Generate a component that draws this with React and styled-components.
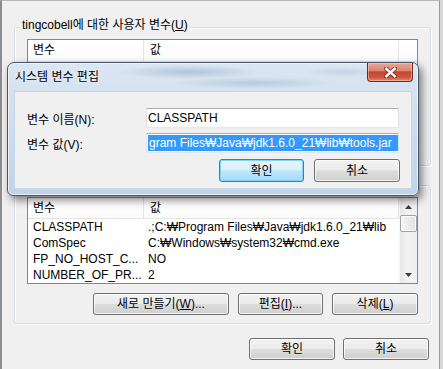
import React from "react";
import styled, { createGlobalStyle } from "styled-components";

const Global = createGlobalStyle`
  html, body { margin: 0; padding: 0; background: #d8d8d8; }
  body {
    font-family: "Liberation Sans", "DejaVu Sans", "Noto Sans CJK KR", sans-serif;
    font-size: 12px;
    color: #000;
  }
  #root { width: 443px; height: 369px; overflow: hidden; }
`;

const Window = styled.div`
  position: relative;
  box-sizing: border-box;
  width: 440px;
  height: 369px;
  background: #f0f0f0;
  border-left: 2px solid #8d8d8d;
  border-right: 1px solid #9a9a9a;
  border-top: 1px solid #b8b8b8;
  padding: 26px 8px 0 12px;
`;

const GroupBox = styled.section`
  border: 1px solid #d5dfe5;
  border-radius: 3px;
  box-shadow: inset 1px 1px 0 #fff, 1px 1px 0 #fff;
  padding: 0 12px 8px;
  margin-top: ${(p) => p.$gap || 0}px;
`;

const GroupTitle = styled.div`
  width: fit-content;
  margin: -10px 0 0 -7px;
  padding: 0 2px;
  height: 14px;
  line-height: 14px;
  background: #f0f0f0;
  white-space: nowrap;
`;

const List = styled.div`
  margin-top: 7px;
  height: 87px;
  box-sizing: border-box;
  border: 1px solid #828790;
  background: #fff;
  display: flex;
  overflow: hidden;
`;

const ListMain = styled.div`
  flex: 1;
  min-width: 0;
  display: flex;
  flex-direction: column;
`;

const Header = styled.div`
  display: flex;
  height: 22px;
  box-sizing: border-box;
  border-bottom: 1px solid #e5e5e5;
  background: linear-gradient(#ffffff, #fbfbfc);
`;

const HeaderCell = styled.div`
  width: ${(p) => p.$w}px;
  flex: ${(p) => (p.$w ? "none" : "1")};
  box-sizing: border-box;
  padding-left: ${(p) => p.$pad || 0}px;
  line-height: 20px;
  border-right: ${(p) => (p.$w ? "1px solid #e5e5e5" : "none")};
  white-space: nowrap;
`;

const Row = styled.div`
  display: flex;
  height: 16px;
  line-height: 16px;
  white-space: nowrap;
`;

const Cell = styled.div`
  width: ${(p) => p.$w}px;
  flex: ${(p) => (p.$w ? "none" : "1")};
  min-width: 0;
  box-sizing: border-box;
  padding-left: ${(p) => p.$pad}px;
  overflow: hidden;
`;

const ScrollBar = styled.div`
  width: 17px;
  flex: none;
  display: flex;
  flex-direction: column;
  background: linear-gradient(90deg, #e6e6e6, #f2f2f2 40%, #f0f0f0);
  border-left: 1px solid #f4f4f4;
`;

const ScrollArrow = styled.div`
  height: 17px;
  flex: none;
  display: flex;
  align-items: center;
  justify-content: center;
`;

const ScrollThumb = styled.div`
  height: 17px;
  flex: none;
  box-sizing: border-box;
  border: 1px solid #a3a3a3;
  border-radius: 2px;
  background: linear-gradient(90deg, #f5f5f5, #e2e2e2);
  box-shadow: inset 0 0 0 1px #fafafa;
`;

const ScrollTrack = styled.div`
  flex: 1;
`;

const ButtonRow = styled.div`
  display: flex;
  justify-content: flex-end;
  gap: ${(p) => p.$gap}px;
  margin-top: ${(p) => p.$top}px;
  margin-right: ${(p) => p.$right || 0}px;
`;

const Button = styled.div`
  width: ${(p) => p.$w}px;
  height: ${(p) => p.$h || 22}px;
  box-sizing: border-box;
  border: 1px solid ${(p) => (p.$focus ? "#3c7fb1" : "#707070")};
  border-radius: 3px;
  background: ${(p) =>
    p.$focus
      ? "linear-gradient(#eaf6fd 0%, #d9f0fc 48%, #bee6fd 52%, #a7d9f5 100%)"
      : "linear-gradient(#f2f2f2 0%, #ebebeb 48%, #dddddd 52%, #cfcfcf 100%)"};
  box-shadow: inset 0 0 0 1px ${(p) => (p.$focus ? "#7fd4f7" : "rgba(255,255,255,0.75)")};
  display: flex;
  align-items: center;
  justify-content: center;
  white-space: nowrap;
  line-height: 14px;
`;

const Modal = styled.div`
  position: absolute;
  left: 5px;
  top: 61px;
  width: 412px;
  height: 134px;
  box-sizing: border-box;
  border: 1px solid #46576b;
  border-radius: 7px 7px 6px 6px;
  background: linear-gradient(180deg, #dbe6f2 0%, #cfdded 45%, #bfd3ea 100%);
  box-shadow: inset 0 0 0 1px rgba(255, 255, 255, 0.65), 3px 4px 9px rgba(0, 0, 0, 0.5);
  padding: 0 6px 6px;
  display: flex;
  flex-direction: column;
`;

const TitleBar = styled.div`
  height: 28px;
  flex: none;
  display: flex;
  align-items: flex-start;
  background:
    radial-gradient(ellipse 70px 7px at 175px 9px, rgba(80, 110, 150, 0.28), transparent),
    radial-gradient(ellipse 80px 6px at 240px 20px, rgba(80, 110, 150, 0.22), transparent),
    radial-gradient(ellipse 40px 5px at 330px 9px, rgba(80, 110, 150, 0.15), transparent);
`;

const TitleText = styled.div`
  align-self: center;
  padding-left: 1px;
  line-height: 14px;
  white-space: nowrap;
  text-shadow: 0 0 6px rgba(255, 255, 255, 0.9);
`;

const CloseButton = styled.div`
  margin-left: auto;
  margin-right: -1px;
  width: 46px;
  height: 19px;
  box-sizing: border-box;
  border: 1px solid #6b2a22;
  border-top: none;
  border-radius: 0 0 4px 4px;
  background: linear-gradient(#e8a797 0%, #dc8471 42%, #c4442f 50%, #cc563f 78%, #e0896f 100%);
  box-shadow: inset 0 0 0 1px rgba(255, 220, 210, 0.45);
  display: flex;
  align-items: center;
  justify-content: center;
`;

const Client = styled.div`
  flex: 1;
  box-sizing: border-box;
  border: 1px solid #c8d7e8;
  background: #f0f0f0;
  padding: 16px 11px 6px 12px;
  display: flex;
  flex-direction: column;
`;

const FormRow = styled.div`
  display: flex;
  align-items: center;
  height: 20px;
  margin-top: ${(p) => p.$top || 0}px;
`;

const Label = styled.div`
  flex: 1;
  white-space: nowrap;
`;

const TextBox = styled.div`
  width: 253px;
  height: 20px;
  margin-right: 1px;
  box-sizing: border-box;
  border: 1px solid;
  border-color: #abadb3 #dbdfe6 #e3e9ef #e2e3ea;
  background: #fff;
  display: flex;
  align-items: center;
  padding-left: 1px;
  overflow: hidden;
  white-space: nowrap;
`;

const Selected = styled.span`
  flex: 1;
  min-width: 0;
  overflow: hidden;
  background: #3399ff;
  color: #fff;
  line-height: 16px;
  padding-left: 1px;
`;

const Arrow = ({ up }) => (
  <svg width="7" height="4" viewBox="0 0 7 4">
    <path d={up ? "M0 4 L3.5 0 L7 4 Z" : "M0 0 L3.5 4 L7 0 Z"} fill="#3a3a3a" />
  </svg>
);

const CloseGlyph = () => (
  <svg width="13" height="11" viewBox="0 0 13 11">
    <path d="M2 1.5 L11 9.5 M11 1.5 L2 9.5" stroke="#5a2219" strokeWidth="4.2" strokeLinecap="round" opacity="0.75" />
    <path d="M2.3 1.8 L10.7 9.2 M10.7 1.8 L2.3 9.2" stroke="#ffffff" strokeWidth="2.4" strokeLinecap="square" />
  </svg>
);

const userRows = [
  ["TEMP", "%USERPROFILE%₩AppData₩Local₩Temp"],
  ["TMP", "%USERPROFILE%₩AppData₩Local₩Temp"],
];

const sysRows = [
  ["CLASSPATH", ".;C:₩Program Files₩Java₩jdk1.6.0_21₩lib"],
  ["ComSpec", "C:₩Windows₩system32₩cmd.exe"],
  ["FP_NO_HOST_C...", "NO"],
  ["NUMBER_OF_PR...", "2"],
];

const VarList = ({ rows, scroll }) => (
  <List>
    <ListMain>
      <Header>
        <HeaderCell $w={116} $pad={5}>변수</HeaderCell>
        <HeaderCell $w={255} $pad={6}>값</HeaderCell>
        <HeaderCell />
      </Header>
      {rows.map(([k, v]) => (
        <Row key={k}>
          <Cell $w={116} $pad={5}>{k}</Cell>
          <Cell $w={255} $pad={4}>{v}</Cell>
        </Row>
      ))}
    </ListMain>
    {scroll && (
      <ScrollBar>
        <ScrollArrow><Arrow up /></ScrollArrow>
        <ScrollThumb />
        <ScrollTrack />
        <ScrollArrow><Arrow /></ScrollArrow>
      </ScrollBar>
    )}
  </List>
);

const GroupButtons = () => (
  <ButtonRow $gap={9} $top={9}>
    <Button $w={136}>새로 만들기(<u>W</u>)...</Button>
    <Button $w={85}>편집(<u>I</u>)...</Button>
    <Button $w={86}>삭제(<u>L</u>)</Button>
  </ButtonRow>
);

export default function App() {
  return (
    <>
      <Global />
      <Window>
        <GroupBox>
          <GroupTitle>tingcobell에 대한 사용자 변수(<u>U</u>)</GroupTitle>
          <VarList rows={userRows} />
          <GroupButtons />
        </GroupBox>
        <GroupBox $gap={19}>
          <GroupTitle>시스템 변수(<u>S</u>)</GroupTitle>
          <VarList rows={sysRows} scroll />
          <GroupButtons />
        </GroupBox>
        <ButtonRow $gap={8} $top={14} $right={2}>
          <Button $w={86}>확인</Button>
          <Button $w={86}>취소</Button>
        </ButtonRow>

        <Modal>
          <TitleBar>
            <TitleText>시스템 변수 편집</TitleText>
            <CloseButton><CloseGlyph /></CloseButton>
          </TitleBar>
          <Client>
            <FormRow>
              <Label>변수 이름(N):</Label>
              <TextBox>CLASSPATH</TextBox>
            </FormRow>
            <FormRow $top={5}>
              <Label>변수 값(V):</Label>
              <TextBox>
                <Selected>gram Files₩Java₩jdk1.6.0_21₩lib₩tools.jar</Selected>
              </TextBox>
            </FormRow>
            <ButtonRow $gap={10} $top={6}>
              <Button $w={85} $h={23} $focus>확인</Button>
              <Button $w={86} $h={23}>취소</Button>
            </ButtonRow>
          </Client>
        </Modal>
      </Window>
    </>
  );
}
